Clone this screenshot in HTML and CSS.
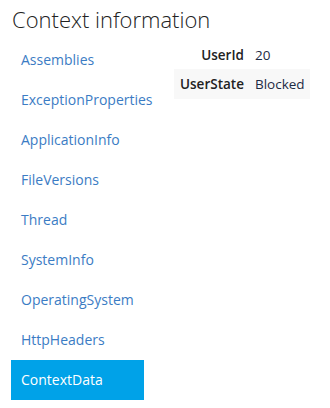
FILE: index.html
```html
<!DOCTYPE html>
<html>
<head>
<meta charset="utf-8">
<link rel="stylesheet" href="styles.css">
</head>
<body>
<div class="page">
  <h1 class="title">Context information</h1>
  <div class="content">
    <ul class="nav">
      <li class="nav-item">Assemblies</li>
      <li class="nav-item">ExceptionProperties</li>
      <li class="nav-item">ApplicationInfo</li>
      <li class="nav-item">FileVersions</li>
      <li class="nav-item">Thread</li>
      <li class="nav-item">SystemInfo</li>
      <li class="nav-item">OperatingSystem</li>
      <li class="nav-item">HttpHeaders</li>
      <li class="nav-item active">ContextData</li>
    </ul>
    <table class="data">
      <tr><th>UserId</th><td>20</td></tr>
      <tr class="alt"><th>UserState</th><td>Blocked</td></tr>
    </table>
  </div>
</div>
</body>
</html>
```
FILE: styles.css
```css
html, body { margin: 0; padding: 0; background: #fff; }
body { font-family: "Open Sans", "Noto Sans", sans-serif; }
.page { padding: 0 0 0 11px; }
.title {
  margin: 0;
  height: 40px;
  padding-left: 1px;
  font-size: 22px;
  font-weight: 300;
  line-height: 38px;
  color: #222;
}
.content { display: flex; align-items: flex-start; }
.nav { list-style: none; margin: 0; padding: 0; width: 133px; }
.nav-item {
  height: 40px;
  line-height: 40px;
  padding-left: 10px;
  font-size: 14px;
  color: #3b7cc4;
  white-space: nowrap;
}
.nav-item.active { background: #00a2e8; color: #fff; }
.data { margin-left: 30px; border-collapse: collapse; font-size: 13.5px; }
.data tr { height: 29px; }
.data tr.alt { height: 30px; background: #f8f8f8; }
.data th { text-align: right; font-weight: 600; color: #222; padding: 0 5px 0 6px; white-space: nowrap; }
.data td { text-align: left; color: #1d2b44; padding: 0 5px 0 6px; white-space: nowrap; }
```
